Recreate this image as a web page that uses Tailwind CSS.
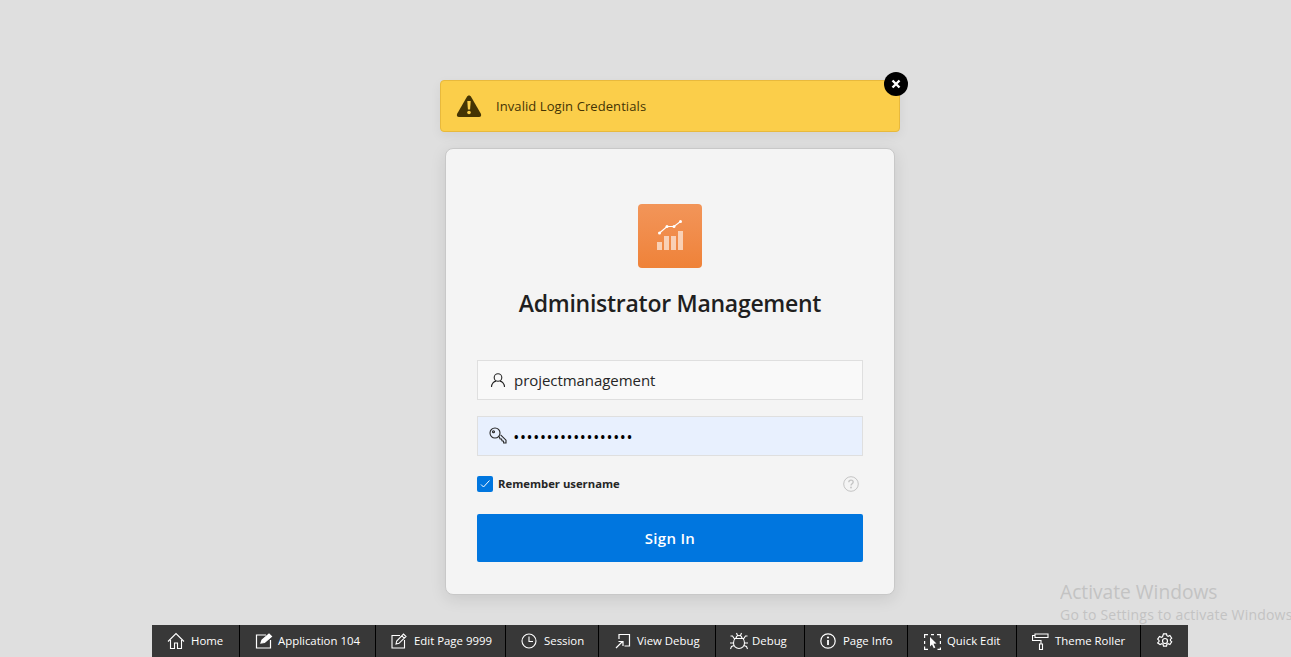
<!DOCTYPE html>
<html lang="en">
<head>
  <meta charset="UTF-8" />
  <title>Administrator Management</title>
  <script src="https://cdn.jsdelivr.net/npm/@tailwindcss/browser@4"></script>
</head>

<body class="relative h-[657px] overflow-hidden bg-[#dfdfdf] font-['Open_Sans',sans-serif] text-[#262626]">
  <div class="flex flex-col items-center pl-[49px] pt-[80px]">
    <!-- alert -->
    <div class="relative flex h-[52px] w-[460px] items-center rounded-[4px] border border-[#e8b93c] bg-[#fbce4a] pl-[15px] shadow-[0_4px_12px_rgba(0,0,0,0.06)]">
      <svg class="h-[24px] w-[26px]" viewBox="0 0 26 24">
        <path d="M13 1.500c-1 0-1.600.5-2.200 1.500L1.300 19.500C.3 21.300 1 23 3 23h20c2 0 2.700-1.700 1.700-3.500L15.200 3C14.600 2 14 1.500 13 1.500z" fill="#443404" />
        <path d="M11.300 7h3.400l-.6 8.500h-2.200z" fill="#fbce4a" />
        <circle cx="13" cy="18.500" r="1.800" fill="#fbce4a" />
      </svg>
      <span class="ml-[14px] pt-[1px] text-[13px] tracking-[0.08px] text-[#443404]">Invalid Login Credentials</span>
      <button class="absolute right-[-9px] top-[-9px] flex h-[24px] w-[24px] items-center justify-center rounded-full bg-black">
        <svg class="h-[10px] w-[10px]" viewBox="0 0 10 10"><path d="M1.500 1.500l7 7M8.500 1.500l-7 7" stroke="#fff" stroke-width="2.400" /></svg>
      </button>
    </div>

    <!-- login card -->
    <div class="mt-[16px] flex h-[447px] w-[450px] flex-col items-center rounded-[8px] border border-[#c8c8c8] bg-[#f4f4f4] pt-[55px] shadow-[0_4px_16px_rgba(0,0,0,0.1)]">
      <div class="flex h-[64px] w-[64px] items-center justify-center rounded-[4px] bg-gradient-to-b from-[#f29559] to-[#ef8238]">
        <svg class="h-[64px] w-[64px]" viewBox="0 0 64 64">
          <path d="M19 46h5V38h-5zM26 46h5V32h-5zM33 46h5V32h-5zM40 46h5V27h-5z" fill="#fff" fill-opacity="0.6" />
          <path d="M21.500 29l7.500-6.500 7 0 6.500-5" fill="none" stroke="#fff" stroke-width="1.200" />
          <circle cx="21.500" cy="29" r="1.500" fill="#fff" />
          <circle cx="29" cy="22.500" r="1.500" fill="#fff" />
          <circle cx="36" cy="22.500" r="1.500" fill="#fff" />
          <circle cx="42.500" cy="17.500" r="1.500" fill="#fff" />
        </svg>
      </div>
      <h1 class="mt-[19px] text-[23px] font-semibold leading-[32px] tracking-[-0.27px] text-[#1f1f1f]">Administrator Management</h1>

      <div class="mt-[41px] flex h-[40px] w-[386px] items-center border border-[#dfdfdf] bg-[#f9f9f9] pl-[12px]">
        <svg class="h-[16px] w-[16px]" viewBox="0 0 16 16" fill="none" stroke="#262626" stroke-width="1.100">
          <circle cx="8" cy="5.500" r="3.800" />
          <path d="M1.500 15c0-3.200 2.500-5.700 4.500-5.900M14.500 15c0-3.200-2.500-5.700-4.500-5.900" />
        </svg>
        <span class="ml-[8px] text-[15px] tracking-[-0.05px] text-[#262626]">projectmanagement</span>
      </div>

      <div class="mt-[16px] flex h-[40px] w-[386px] items-center border border-[#dfdfdf] bg-[#e8f0fe] pl-[11px]">
        <svg class="h-[18px] w-[18px]" viewBox="0 0 18 18" fill="none" stroke="#262626" stroke-width="1.100">
          <circle cx="6" cy="6" r="5" />
          <circle cx="4.500" cy="4.800" r="1" />
          <path d="M9.500 9.500l1 .6 .4 1.700 1.700.3 .4 1.700 1.500.3 .2 1.900h2.300v-2.800l-5.400-5.400" />
        </svg>
        <span class="ml-[7px] pt-[4px] text-[12px] font-bold tracking-[2.150px] text-black">••••••••••••••••••</span>
      </div>

      <div class="mt-[20px] flex h-[16px] w-[386px] items-center">
        <span class="flex h-[16px] w-[16px] items-center justify-center rounded-[2px] bg-[#0076df]">
          <svg class="h-[12px] w-[12px]" viewBox="0 0 12 12" fill="none" stroke="#fff" stroke-width="1"><path d="M2 6.500l2.500 2.500L10.500 2.500" /></svg>
        </span>
        <span class="ml-[5px] text-[11.300px] font-bold text-[#262626]">Remember username</span>
        <svg class="ml-auto mr-[4px] h-[16px] w-[16px]" viewBox="0 0 16 16" fill="none" stroke="#c4c4c4">
          <circle cx="8" cy="8" r="7.300" />
          <path d="M5.800 6.300c0-1.400 1-2.200 2.200-2.200s2.200.8 2.200 2c0 1.700-2.200 1.700-2.200 3.400" stroke-width="1.300" />
          <circle cx="8" cy="11.500" r=".9" fill="#c4c4c4" stroke="none" />
        </svg>
      </div>

      <button class="mt-[22px] h-[48px] w-[386px] rounded-[2px] bg-[#0076df] text-[15px] font-semibold tracking-[0.3px] text-white">Sign In</button>
    </div>
  </div>

  <!-- dev toolbar -->
  <div class="absolute bottom-0 left-[152px] flex h-[32px] w-[1036px] bg-[#383838] text-[11.400px] text-white">
    <div class="flex w-[88px] items-center gap-[6px] border-r border-black pl-[15px]">
      <svg class="h-[18px] w-[18px]" viewBox="0 0 18 18" fill="none" stroke="#fff" stroke-width="1.100"><path d="M1 9.500L9 1.500l8 8M3.500 8v8.500h4V11h3v5.500h4V8" /></svg>
      <span>Home</span>
    </div>
    <div class="flex w-[136px] items-center gap-[5px] border-r border-black pl-[15px]">
      <svg class="h-[18px] w-[18px]" viewBox="0 0 18 18" fill="none" stroke="#fff" stroke-width="1.200"><path d="M11 3H1.500v13h14V8" /><path d="M6 11l1-3 7-6 2.500 2.500-7 6z" fill="#fff" /></svg>
      <span>Application 104</span>
    </div>
    <div class="flex w-[130px] items-center gap-[7px] border-r border-black pl-[15px]">
      <svg class="h-[16px] w-[16px]" viewBox="0 0 16 16" fill="none" stroke="#fff" stroke-width="1.100"><path d="M9 2.500H1v12.500h12.500V7" /><path d="M5 11l.7-3L12.500 1 15 3.500 8 10.300zM10.800 2.800l2.400 2.400" /></svg>
      <span>Edit Page 9999</span>
    </div>
    <div class="flex w-[93px] items-center gap-[7px] border-r border-black pl-[15px]">
      <svg class="h-[16px] w-[16px]" viewBox="0 0 16 16" fill="none" stroke="#fff" stroke-width="1.100"><circle cx="8" cy="8" r="7" /><path d="M8 3.500V8.500H12" /></svg>
      <span>Session</span>
    </div>
    <div class="flex w-[117px] items-center gap-[6px] border-r border-black pl-[16px]">
      <svg class="h-[16px] w-[16px]" viewBox="0 0 16 16" fill="none" stroke="#fff" stroke-width="1.200"><path d="M4 6V1.500h10.500V13H9.500" /><path d="M1 15l6.500-6.500M3.500 8.500h4.500V13" /></svg>
      <span>View Debug</span>
    </div>
    <div class="flex w-[89px] items-center gap-[4px] border-r border-black pl-[14px]">
      <svg class="h-[18px] w-[18px]" viewBox="0 0 18 18" fill="none" stroke="#fff" stroke-width="1.100"><path d="M5 6.500h8c1 1.200 1.500 2.800 1.500 4.500 0 3-2.300 5.500-5.500 5.500S3.500 14 3.500 11c0-1.700.5-3.300 1.500-4.500zM6 6.500C6 4.500 7.300 3.500 9 3.500s3 1 3 3M6.500 1l1 2.500M11.500 1l-1 2.500M.5 4h2l2 3M17.500 4h-2l-2 3M0 11h3.500M18 11h-3.500M.5 17l1-2.500 2.800-1M17.500 17l-1-2.500-2.800-1" /></svg>
      <span>Debug</span>
    </div>
    <div class="flex w-[103px] items-center gap-[7px] border-r border-black pl-[15px]">
      <svg class="h-[16px] w-[16px]" viewBox="0 0 16 16" fill="none" stroke="#fff" stroke-width="1.200"><circle cx="8" cy="8" r="7.200" /><path d="M8 7v5" stroke-width="1.800" /><circle cx="8" cy="4.500" r="1.100" fill="#fff" stroke="none" /></svg>
      <span>Page Info</span>
    </div>
    <div class="flex w-[109px] items-center gap-[6px] border-r border-black pl-[16px]">
      <svg class="h-[17px] w-[17px]" viewBox="0 0 17 17" fill="none" stroke="#fff" stroke-width="1.200"><path d="M.6 5V1.600H4M7 1.600h3M13 1.600h3.400V5M16.400 8v3M.6 8v3M.6 13.500v2.900H4M13.500 16.400h2.900v-2" /><path d="M6 4l6.500 6.500-3 .3 1.800 3.700-1.500.7-1.800-3.700L6 13.500z" fill="#fff" stroke="none" /></svg>
      <span>Quick Edit</span>
    </div>
    <div class="flex w-[124px] items-center gap-[6px] border-r border-black pl-[15px]">
      <svg class="h-[17px] w-[17px]" viewBox="0 0 17 17" fill="none" stroke="#fff" stroke-width="1.100"><path d="M3 1h13v3.500H3zM3 2.500H.5V7.500H9V11" /><path d="M7.500 11h3v5.500h-3z" /></svg>
      <span>Theme Roller</span>
    </div>
    <div class="flex flex-1 items-center justify-center">
      <svg class="h-[16px] w-[16px]" viewBox="0 0 16 16" fill="none" stroke="#fff" stroke-width="1.200"><circle cx="8" cy="8" r="2.500" /><path d="M6.500 .8h3l.4 1.900 1.200.6 1.800-.8 1.800 2.600-1.300 1.300v1.200l1.300 1.300-1.800 2.600-1.800-.8-1.200.6-.4 1.900h-3l-.4-1.900-1.200-.6-1.800.8L.7 9.900 2 8.600V7.400L.7 6.100l1.800-2.600 1.800.8 1.200-.6z" /></svg>
    </div>
  </div>

  <!-- windows watermark -->
  <div class="absolute left-[1060px] top-[578px] w-[231px] overflow-hidden whitespace-nowrap text-[#c3c3c3]">
    <div class="text-[19.200px] leading-[27px]">Activate Windows</div>
    <div class="text-[14px] leading-[19px] tracking-[0.2px]">Go to Settings to activate Windows.</div>
  </div>
</body>
</html>
